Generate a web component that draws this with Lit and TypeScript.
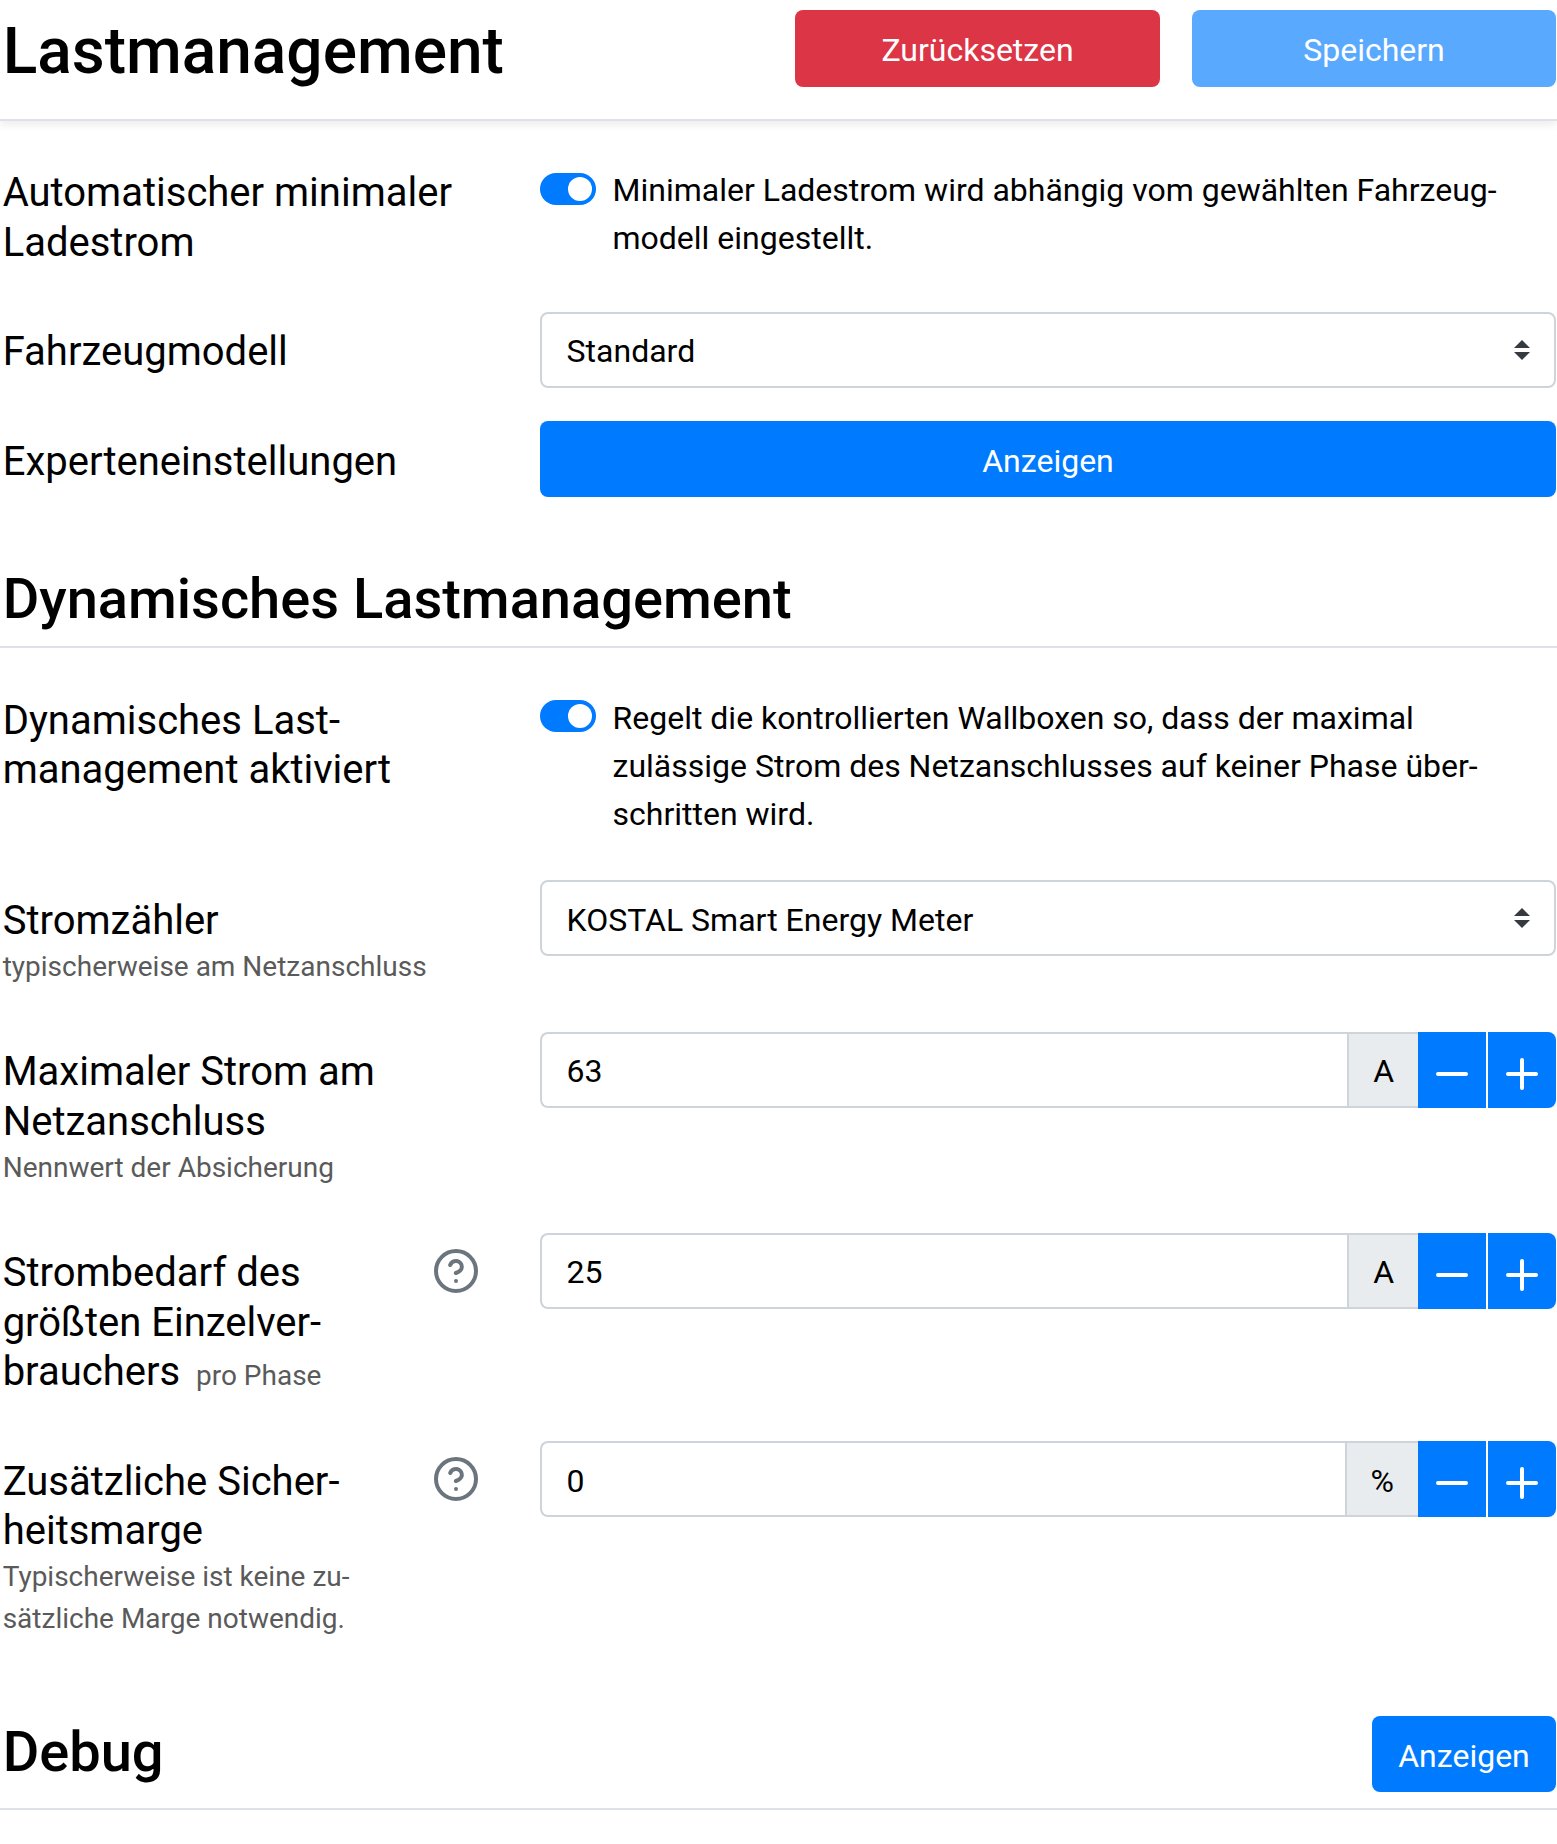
import { LitElement, html, css, svg, nothing } from "lit";
import { customElement, property } from "lit/decorators.js";

const icons = {
  minus: svg`<line x1="5" y1="12" x2="19" y2="12"></line>`,
  plus: svg`<line x1="12" y1="5" x2="12" y2="19"></line><line x1="5" y1="12" x2="19" y2="12"></line>`,
  help: svg`<circle cx="12" cy="12" r="10"></circle><path d="M9.09 9a3 3 0 0 1 5.83 1c0 2-3 3-3 3"></path><line x1="12" y1="17" x2="12.01" y2="17"></line>`,
};

const icon = (name: keyof typeof icons) => html`<svg class="icon" viewBox="0 0 24 24" aria-hidden="true">${icons[name]}</svg>`;

// --drop lowers the text of a row's label and control by a pixel or two
const shared = css`
  *, *::before, *::after { box-sizing: border-box; }
  .icon {
    display: block; width: 48px; height: 48px; flex: none;
    fill: none; stroke: currentColor; stroke-width: 2;
    stroke-linecap: round; stroke-linejoin: round;
  }
  .btn {
    display: flex; align-items: flex-start; justify-content: center;
    height: 76px; padding: calc(14px + var(--drop, 1px)) 26px 0; border: 0; border-radius: 8px;
    font: 400 32px/48px Roboto, sans-serif; color: #fff; background: #007bff;
  }
`;

@customElement("toggle-switch")
class ToggleSwitch extends LitElement {
  static styles = [shared, css`
    :host { display: flex; gap: 16.5px; padding-top: 12px; }
    .track {
      flex: none; width: 56px; height: 32px; margin-top: var(--track-top, 8px); padding: 4px;
      border-radius: 16px; background: #007bff; display: flex; justify-content: flex-end;
    }
    .knob { width: 24px; height: 24px; border-radius: 50%; background: #fff; }
    .text { line-height: 48px; padding-top: 1px; white-space: nowrap; }
  `];
  render() {
    return html`<span class="track"><span class="knob"></span></span><span class="text"><slot></slot></span>`;
  }
}

@customElement("select-box")
class SelectBox extends LitElement {
  @property() value = "";
  static styles = [shared, css`
    .box {
      display: flex; align-items: center; justify-content: space-between;
      height: 76px; padding: 0 24px 0 24.6px; border: 2px solid #ced4da; border-radius: 8px;
      background: #fff; line-height: 48px;
    }
    .value { padding-top: calc(var(--drop) * 2); }
    .caret { width: 16px; height: 20px; fill: #343a40; }
  `];
  render() {
    return html`<div class="box"><span class="value">${this.value}</span>
      <svg class="caret" viewBox="0 0 4 5"><path d="M2 0L0 2h4zm0 5L0 3h4z"></path></svg></div>`;
  }
}

@customElement("number-input")
class NumberInput extends LitElement {
  @property() value = "";
  @property() unit = "";
  static styles = [shared, css`
    .group { display: flex; height: 76px; line-height: 48px; }
    .field, .unit {
      padding: calc(12px + var(--drop)) 24px 0; border: 2px solid #ced4da; border-right: 0;
    }
    .field { flex: 1; min-width: 0; padding-left: 24.6px; border-radius: 8px 0 0 8px; }
    .unit { background: #e9ecef; }
    .step { width: 68px; padding: 18px 0 0; border-radius: 0; }
    .up { margin-left: 2px; border-radius: 0 8px 8px 0; }
  `];
  render() {
    return html`<div class="group">
      <span class="field">${this.value}</span><span class="unit">${this.unit}</span>
      <button class="btn step" aria-label="-">${icon("minus")}</button>
      <button class="btn step up" aria-label="+">${icon("plus")}</button>
    </div>`;
  }
}

@customElement("form-row")
class FormRow extends LitElement {
  @property({ type: Boolean }) help = false;
  static styles = [shared, css`
    :host {
      --drop: 1px;
      display: grid; grid-template-columns: 478px 1fr; column-gap: 60px; align-items: start;
    }
    .left { display: flex; justify-content: space-between; padding-top: 14px; }
    .label {
      padding: var(--drop) 0 0 0.67px;
      font-size: 40px; line-height: var(--label-line, 49.7px); white-space: nowrap;
    }
    .help { color: #6c757d; }
  `];
  render() {
    return html`<div class="left">
        <div class="label"><slot name="label"></slot></div>
        ${this.help ? html`<div class="help">${icon("help")}</div>` : nothing}
      </div><div><slot></slot></div>`;
  }
}

@customElement("app-root")
class AppRoot extends LitElement {
  static styles = [shared, css`
    :host {
      display: block; height: 1844px; overflow: hidden; background: #fff; color: #000;
      font: 400 32px/48px Roboto, sans-serif;
    }
    h1, h2 { margin: 0; padding-left: 0.67px; font-weight: 500; }
    h1 { font-size: 64px; line-height: 77px; padding-top: 3px; }
    h2 { font-size: 56px; line-height: 67px; }
    .header {
      --drop: 2px;
      display: flex; justify-content: space-between; align-items: flex-start;
      height: 121px; padding: 10px 1px 0 2px;
      border-bottom: 2px solid #dee2e6; box-shadow: 0 4px 8px rgba(0, 0, 0, 0.075);
    }
    .actions { display: grid; grid-template-columns: 365px 364px; column-gap: 32px; }
    .actions .btn { height: 77px; }
    .danger { background: #dc3545; }
    .muted-btn { background: #59a9ff; }
    .rows { display: grid; padding: 0 1px 0 2px; }
    .general { margin-top: 32px; grid-template-rows: 159px 109px 76px; }
    .dynamic { margin-top: 33px; grid-template-rows: 199px 152px 201px 208px 275px; }
    .low { --drop: 2px; }
    .high-track { --track-top: 7px; }
    .tight { --label-line: 49px; }
    .tight .note { padding-top: 1px; }
    .loose { --label-line: 50px; }
    .section {
      display: flex; justify-content: space-between; align-items: flex-start;
      padding: 0 1px 16px 2px; border-bottom: 2px solid #dee2e6;
    }
    .section.first { padding-top: 69px; padding-bottom: 13px; }
    .section.debug { --drop: 2px; }
    .section.debug h2 { padding-top: 3px; }
    .wide { width: 100%; }
    .narrow { width: 184px; padding-left: 0; padding-right: 0; }
    .note { display: block; font-size: 28px; line-height: 42px; color: #5a5a5a; }
    .note.inline { display: inline; padding-left: 6px; line-height: 1; }
  `];
  render() {
    return html`
      <header class="header">
        <h1>Lastmanagement</h1>
        <div class="actions">
          <button class="btn danger">Zurücksetzen</button>
          <button class="btn muted-btn">Speichern</button>
        </div>
      </header>
      <div class="rows general">
        <form-row>
          <span slot="label">Automatischer minimaler<br>Ladestrom</span>
          <toggle-switch>Minimaler Ladestrom wird abhängig vom gewählten Fahrzeug-<br>modell eingestellt.</toggle-switch>
        </form-row>
        <form-row>
          <span slot="label">Fahrzeugmodell</span>
          <select-box value="Standard"></select-box>
        </form-row>
        <form-row class="low">
          <span slot="label">Experteneinstellungen</span>
          <button class="btn wide">Anzeigen</button>
        </form-row>
      </div>
      <div class="section first"><h2>Dynamisches Lastmanagement</h2></div>
      <div class="rows dynamic">
        <form-row class="high-track tight">
          <span slot="label">Dynamisches Last-<br>management aktiviert</span>
          <toggle-switch>Regelt die kontrollierten Wallboxen so, dass der maximal<br>zulässige Strom des Netzanschlusses auf keiner Phase über-<br>schritten wird.</toggle-switch>
        </form-row>
        <form-row class="low">
          <span slot="label">Stromzähler<span class="note">typischerweise am Netzanschluss</span></span>
          <select-box value="KOSTAL Smart Energy Meter"></select-box>
        </form-row>
        <form-row class="loose">
          <span slot="label">Maximaler Strom am<br>Netzanschluss<span class="note">Nennwert der Absicherung</span></span>
          <number-input value="63" unit="A"></number-input>
        </form-row>
        <form-row help>
          <span slot="label">Strombedarf des<br>größten Einzelver-<br>brauchers <span class="note inline">pro Phase</span></span>
          <number-input value="25" unit="A"></number-input>
        </form-row>
        <form-row help class="low tight">
          <span slot="label">Zusätzliche Sicher-<br>heitsmarge<span class="note">Typischerweise ist keine zu-<br>sätzliche Marge notwendig.</span></span>
          <number-input value="0" unit="%"></number-input>
        </form-row>
      </div>
      <div class="section debug">
        <h2>Debug</h2>
        <button class="btn narrow">Anzeigen</button>
      </div>
    `;
  }
}
